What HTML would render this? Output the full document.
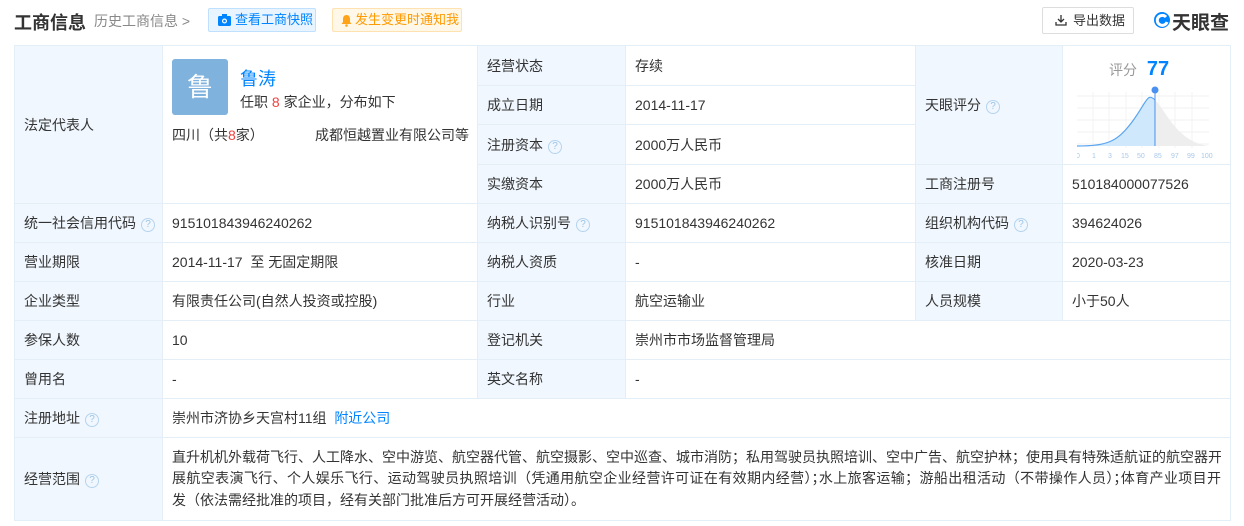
<!DOCTYPE html>
<html><head><meta charset="utf-8"><style>
*{margin:0;padding:0;box-sizing:border-box}
body{width:1244px;height:526px;background:#fff;font-family:"Liberation Sans","Noto Sans CJK SC",sans-serif;color:#333;font-size:14px;position:relative;overflow:hidden}
.hd{position:absolute;top:0;left:0;width:1244px;height:40px;white-space:nowrap}
.t{position:absolute;left:14px;top:9px;font-size:18px;font-weight:bold;color:#333}
.h2{position:absolute;left:94px;top:11px;font-size:14px;color:#888}
.b1{position:absolute;left:208px;top:8px;width:108px;height:24px;border:1px solid #bfe0ff;background:#e8f4ff;color:#0084ff;font-size:13px;line-height:22px;padding-left:26px;border-radius:2px}
.b2{position:absolute;left:332px;top:8px;width:130px;height:24px;border:1px solid #ffe2b0;background:#fff8e8;color:#ff9900;font-size:13px;line-height:22px;padding-left:22px;border-radius:2px;overflow:hidden}
.ex{position:absolute;left:1042px;top:7px;width:92px;height:27px;border:1px solid #ddd;border-radius:2px;font-size:13px;line-height:25px;padding-left:30px;color:#333}
.logo{position:absolute;left:1152px;top:8px;font-size:19px;font-weight:bold;color:#333}
table{position:absolute;left:14px;top:45px;border-collapse:collapse;table-layout:fixed;width:1216px}
td{border:1px solid #e4eef6;padding:0 9px;vertical-align:middle;font-size:14px;color:#333;white-space:nowrap}
td.l{background:#f0f7fe}
.q{display:inline-block;width:14px;height:14px;border:1px solid #b5d4ee;border-radius:50%;color:#9cc4e4;font-size:10px;line-height:12px;text-align:center;margin-left:5px;vertical-align:1px}
.a{color:#0084ff}
.r{color:#f04040}
.p{display:inline-block;width:14px;text-align:center}
.j{text-align:justify;text-align-last:justify;white-space:nowrap;overflow:hidden}
</style></head><body>
<div class="hd">
<div class="t">工商信息</div>
<div class="h2">历史工商信息 &gt;</div>
<div class="b1"><svg style="position:absolute;left:9px;top:5px" width="13" height="12" viewBox="0 0 13 12"><rect x="0" y="2" width="13" height="10" rx="1.5" fill="#0084ff"/><rect x="4" y="0" width="5" height="3" fill="#0084ff"/><circle cx="6.5" cy="7" r="2.5" fill="#fff"/><circle cx="6.5" cy="7" r="1.3" fill="#0084ff"/></svg>查看工商快照</div>
<div class="b2"><svg style="position:absolute;left:8px;top:5px" width="11" height="13" viewBox="0 0 11 13"><path d="M5.5 1C3 1 2 3 2 5v3L0.5 10h10L9 8V5C9 3 8 1 5.5 1z" fill="#ffa31a"/><circle cx="5.5" cy="11.5" r="1.3" fill="#ffa31a"/></svg>发生变更时通知我</div>
<div class="ex"><svg style="position:absolute;left:12px;top:6px" width="12" height="12" viewBox="0 0 12 12" fill="none" stroke="#333" stroke-width="1.3"><path d="M6 1v7M3 5l3 3 3-3M1 8v3h10V8"/></svg>导出数据</div>
<div class="logo"><svg style="position:absolute;left:1px;top:3px" width="18" height="18" viewBox="0 0 18 18"><circle cx="9" cy="9" r="8" fill="#0084ff"/><path d="M13 6a5 5 0 1 0 1 5" stroke="#fff" stroke-width="3" fill="none"/></svg><span style="margin-left:20px">天眼查</span></div>
</div>
<table>
<colgroup><col style="width:148px"><col style="width:315px"><col style="width:148px"><col style="width:290px"><col style="width:147px"><col style="width:168px"></colgroup>
<tr style="height:40px"><td class="l" rowspan="4">法定代表人</td>
<td rowspan="4" style="position:relative;vertical-align:top;padding:0">
<div style="position:absolute;left:9px;top:13px;width:56px;height:56px;background:#7fb2dc;border-radius:3px;color:#fff;font-size:26px;text-align:center;line-height:56px">鲁</div>
<div class="a" style="position:absolute;left:77px;top:19px;font-size:18px">鲁涛</div>
<div style="position:absolute;left:77px;top:46px">任职 <span class="r">8</span> 家企业<span class="p">，</span>分布如下</div>
<div style="position:absolute;left:9px;top:79px">四川<span class="p">（</span>共<span class="r">8</span>家<span class="p">）</span></div>
<div style="position:absolute;left:152px;top:79px">成都恒越置业有限公司等</div>
</td>
<td class="l">经营状态</td><td>存续</td>
<td class="l" rowspan="3">天眼评分<span class="q">?</span></td>
<td rowspan="3" style="position:relative;padding:0">
<div style="position:absolute;left:46px;top:12px;font-size:14px;color:#999">评分 <b style="color:#0084ff;font-size:20px;margin-left:6px">77</b></div>
<svg style="position:absolute;left:14px;top:36px" width="140" height="78" viewBox="0 0 140 78">
<g stroke="#eee" stroke-width="0.7"><path d="M0 14H132M0 26H132M0 38H132M0 50H132M0 62H132M16 10V66M32 10V66M49 10V66M65 10V66M82 10V66M98 10V66M115 10V66"/></g>
<path d="M0 64C30 64 40 60 55 40S70 10 78 18L78 64Z" fill="#cfe8fb" stroke="none"/>
<path d="M0 64C30 64 40 60 55 40S70 10 78 18" fill="none" stroke="#5aa5f0" stroke-width="1.2"/>
<path d="M78 18C90 30 100 60 132 64L78 64Z" fill="#eee"/>
<path d="M78 8V64" stroke="#4a90f0" stroke-width="1"/>
<circle cx="78" cy="8" r="3.5" fill="#4a90f0"/>
<g fill="#a8c8e8" font-size="7" font-family="Liberation Sans"><text x="-1" y="76">0</text><text x="15" y="76">1</text><text x="31" y="76">3</text><text x="44" y="76">15</text><text x="60" y="76">50</text><text x="77" y="76">85</text><text x="94" y="76">97</text><text x="110" y="76">99</text><text x="124" y="76">100</text></g>
</svg>
</td></tr>
<tr style="height:39px"><td class="l">成立日期</td><td>2014-11-17</td></tr>
<tr style="height:40px"><td class="l">注册资本<span class="q">?</span></td><td>2000万人民币</td></tr>
<tr style="height:39px"><td class="l">实缴资本</td><td>2000万人民币</td><td class="l">工商注册号</td><td>510184000077526</td></tr>
<tr style="height:39px"><td class="l">统一社会信用代码<span class="q">?</span></td><td>915101843946240262</td><td class="l">纳税人识别号<span class="q">?</span></td><td>915101843946240262</td><td class="l">组织机构代码<span class="q">?</span></td><td>394624026</td></tr>
<tr style="height:39px"><td class="l">营业期限</td><td>2014-11-17&nbsp; 至 无固定期限</td><td class="l">纳税人资质</td><td>-</td><td class="l">核准日期</td><td>2020-03-23</td></tr>
<tr style="height:39px"><td class="l">企业类型</td><td>有限责任公司(自然人投资或控股)</td><td class="l">行业</td><td>航空运输业</td><td class="l">人员规模</td><td>小于50人</td></tr>
<tr style="height:39px"><td class="l">参保人数</td><td>10</td><td class="l">登记机关</td><td colspan="3">崇州市市场监督管理局</td></tr>
<tr style="height:39px"><td class="l">曾用名</td><td>-</td><td class="l">英文名称</td><td colspan="3">-</td></tr>
<tr style="height:39px"><td class="l">注册地址<span class="q">?</span></td><td colspan="5">崇州市济协乡天宫村11组&nbsp; <span class="a">附近公司</span></td></tr>
<tr style="height:83px"><td class="l">经营范围<span class="q">?</span></td><td colspan="5" style="line-height:21.5px;white-space:normal">
<div class="j">直升机机外载荷飞行、人工降水、空中游览、航空器代管、航空摄影、空中巡查、城市消防<span class="p">；</span>私用驾驶员执照培训、空中广告、航空护林<span class="p">；</span>使用具有特殊适航证的航空器开</div>
<div class="j">展航空表演飞行、个人娱乐飞行、运动驾驶员执照培训<span class="p">（</span>凭通用航空企业经营许可证在有效期内经营<span class="p">）；</span>水上旅客运输<span class="p">；</span>游船出租活动<span class="p">（</span>不带操作人员<span class="p">）；</span>体育产业项目开</div>
<div style="white-space:nowrap">发<span class="p">（</span>依法需经批准的项目<span class="p">，</span>经有关部门批准后方可开展经营活动<span class="p">）。</span></div>
</td></tr>
</table>
</body></html>
